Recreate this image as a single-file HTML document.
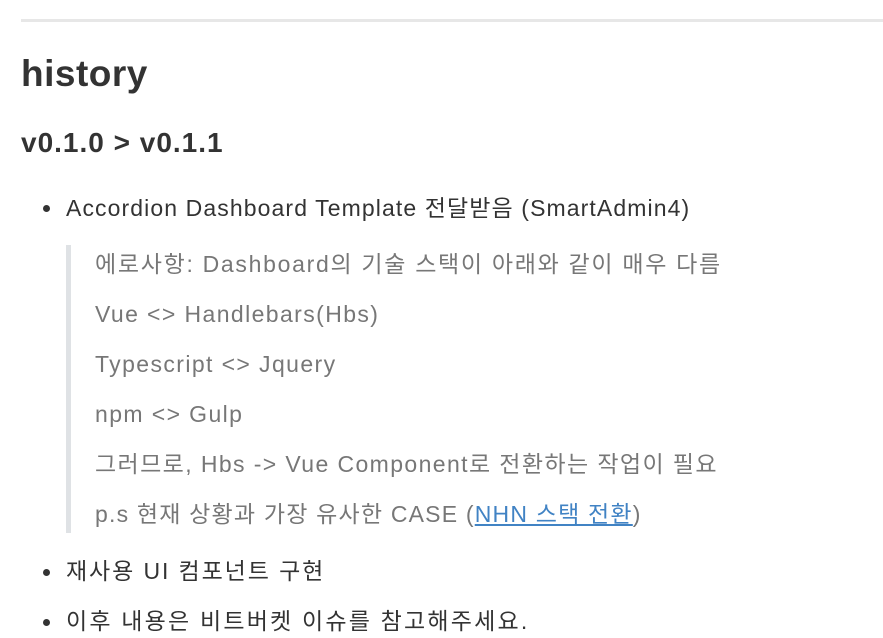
<!DOCTYPE html>
<html><head><meta charset="utf-8"><style>
body{margin:0;background:#fff;width:883px;height:638px;overflow:hidden;font-family:"Liberation Sans","Noto Sans CJK KR",sans-serif;color:#333;position:relative}
.a{position:absolute;white-space:nowrap;line-height:1}
.hr{position:absolute;left:21px;top:19px;width:862px;height:3px;background:#e7e7e7}
.h1{left:21px;top:55px;font-size:37px;font-weight:bold;color:#333;letter-spacing:0.5px}
.h2{left:21px;top:129px;font-size:28px;font-weight:bold;color:#333;letter-spacing:1px}
.li{left:66px;font-size:23px;color:#333;letter-spacing:1.1px}
.dot{position:absolute;width:7px;height:7px;border-radius:50%;background:#333;left:43px}
.bq{position:absolute;left:66px;top:245px;width:5px;height:288px;background:#dfe2e5}
.q{left:95px;font-size:23px;color:#777;letter-spacing:1.4px}
a{color:#4183c4;text-decoration:underline}
</style></head><body>
<div class="hr"></div>
<div class="a h1">history</div>
<div class="a h2">v0.1.0 &gt; v0.1.1</div>
<div class="dot" style="top:205px"></div>
<div class="a li" style="top:197px">Accordion Dashboard Template 전달받음 (SmartAdmin4)</div>
<div class="bq"></div>
<div class="a q" style="top:253px;letter-spacing:1.7px">에로사항: Dashboard의 기술 스택이 아래와 같이 매우 다름</div>
<div class="a q" style="top:303px">Vue &lt;&gt; Handlebars(Hbs)</div>
<div class="a q" style="top:353px">Typescript &lt;&gt; Jquery</div>
<div class="a q" style="top:403px">npm &lt;&gt; Gulp</div>
<div class="a q" style="top:453px">그러므로, Hbs -&gt; Vue Component로 전환하는 작업이 필요</div>
<div class="a q" style="top:503px;letter-spacing:1.2px">p.s 현재 상황과 가장 유사한 CASE (<a>NHN 스택 전환</a>)</div>
<div class="dot" style="top:569px"></div>
<div class="a li" style="top:560px;letter-spacing:1.9px">재사용 UI 컴포넌트 구현</div>
<div class="dot" style="top:619px"></div>
<div class="a li" style="top:610px;letter-spacing:2.2px">이후 내용은 비트버켓 이슈를 참고해주세요.</div>
</body></html>
